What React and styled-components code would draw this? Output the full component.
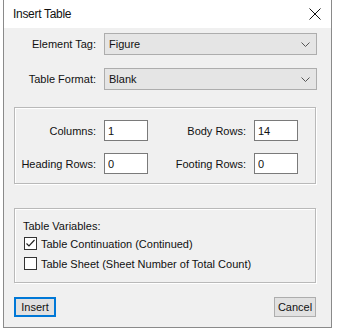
import React from 'react'
import styled, { createGlobalStyle } from 'styled-components'

const Global = createGlobalStyle`
  html, body {
    margin: 0;
    background: #fff;
  }
  body {
    font-family: "Liberation Sans", Arial, sans-serif;
    font-size: 11px;
    color: #111;
  }
`

const Window = styled.div`
  margin-left: 3px;
  width: 327px;
  height: 327px;
  border: 1px solid #8a8a8a;
  border-top: none;
  display: flex;
  flex-direction: column;
  background: #f0f0f0;
`

const TitleBar = styled.div`
  height: 28px;
  background: #fff;
  display: flex;
  align-items: center;
  justify-content: space-between;
  padding: 0 10px 0 9px;
  font-size: 12px;
  letter-spacing: -0.3px;
`

const Body = styled.div`
  flex: 1;
  padding: 5px 15px 0 10px;
  display: flex;
  flex-direction: column;
`

const FieldGrid = styled.div`
  display: grid;
  grid-template-columns: 82px 1fr;
  column-gap: 8px;
  row-gap: 13px;
  align-items: center;
  margin-right: -1px;
`

const Label = styled.label`
  text-align: right;
  white-space: nowrap;
`

const Select = styled.div`
  height: 20px;
  border: 1px solid #adadad;
  background: #e5e5e5;
  display: flex;
  align-items: center;
  justify-content: space-between;
  padding: 0 6px 0 4px;
`

const Group = styled.div`
  border: 1px solid #b9b9b9;
  box-shadow: inset 1px 1px 0 #fff, 1px 1px 0 #fff;
  margin-top: ${p => p.$top}px;
  padding: ${p => p.$pad};
`

const NumberGrid = styled.div`
  display: grid;
  grid-template-columns: 81px 44px 90px 44px;
  column-gap: 8px;
  row-gap: 12px;
  align-items: center;
`

const NumInput = styled.input`
  box-sizing: border-box;
  width: 44px;
  height: 21px;
  border: 1px solid #7a7a7a;
  background: #fff;
  font: inherit;
  color: #111;
  padding: 0 3px;
  margin: 0;
  outline: none;
`

const GroupTitle = styled.div`
  margin-bottom: 5px;
`

const CheckRow = styled.div`
  display: flex;
  align-items: center;
  gap: 4px;
  height: 13px;
  margin-left: 1px;
  & + & {
    margin-top: 7px;
  }
`

const Box = styled.span`
  box-sizing: border-box;
  width: 13px;
  height: 13px;
  border: 1px solid #333;
  background: #fff;
  display: flex;
  align-items: center;
  justify-content: center;
`

const Buttons = styled.div`
  display: flex;
  justify-content: space-between;
  margin-top: 14px;
`

const Button = styled.div`
  box-sizing: border-box;
  width: 42px;
  height: 20px;
  display: flex;
  align-items: center;
  justify-content: center;
  background: #e1e1e1;
  border: ${p => (p.$default ? '2px solid #0078d7' : '1px solid #adadad')};
`

const Chevron = () => (
  <svg width="9" height="5" viewBox="0 0 9 5">
    <path d="M0.5 0.5 L4.5 4.5 L8.5 0.5" fill="none" stroke="#555" strokeWidth="1" />
  </svg>
)

const Close = () => (
  <svg width="12" height="12" viewBox="0 0 12 12">
    <path d="M0.5 0.5 L11.5 11.5 M11.5 0.5 L0.5 11.5" stroke="#111" strokeWidth="1" />
  </svg>
)

const Check = () => (
  <svg width="11" height="11" viewBox="0 0 11 11">
    <path d="M1.5 5.5 L4 8 L9.5 2" fill="none" stroke="#222" strokeWidth="1.2" />
  </svg>
)

const Checkbox = ({ checked, children }) => (
  <CheckRow>
    <Box>{checked && <Check />}</Box>
    <span>{children}</span>
  </CheckRow>
)

export default function App() {
  return (
    <>
      <Global />
      <Window>
        <TitleBar>
          <span>Insert Table</span>
          <Close />
        </TitleBar>
        <Body>
          <FieldGrid>
            <Label>Element Tag:</Label>
            <Select>
              <span>Figure</span>
              <Chevron />
            </Select>
            <Label>Table Format:</Label>
            <Select>
              <span>Blank</span>
              <Chevron />
            </Select>
          </FieldGrid>

          <Group $top={17} $pad="12px 0 9px 0">
            <NumberGrid>
              <Label>Columns:</Label>
              <NumInput defaultValue="1" />
              <Label>Body Rows:</Label>
              <NumInput defaultValue="14" />
              <Label>Heading Rows:</Label>
              <NumInput defaultValue="0" />
              <Label>Footing Rows:</Label>
              <NumInput defaultValue="0" />
            </NumberGrid>
          </Group>

          <Group $top={24} $pad="11px 8px 12px 8px">
            <GroupTitle>Table Variables:</GroupTitle>
            <Checkbox checked>Table Continuation (Continued)</Checkbox>
            <Checkbox>Table Sheet (Sheet Number of Total Count)</Checkbox>
          </Group>

          <Buttons>
            <Button $default>Insert</Button>
            <Button>Cancel</Button>
          </Buttons>
        </Body>
      </Window>
    </>
  )
}
